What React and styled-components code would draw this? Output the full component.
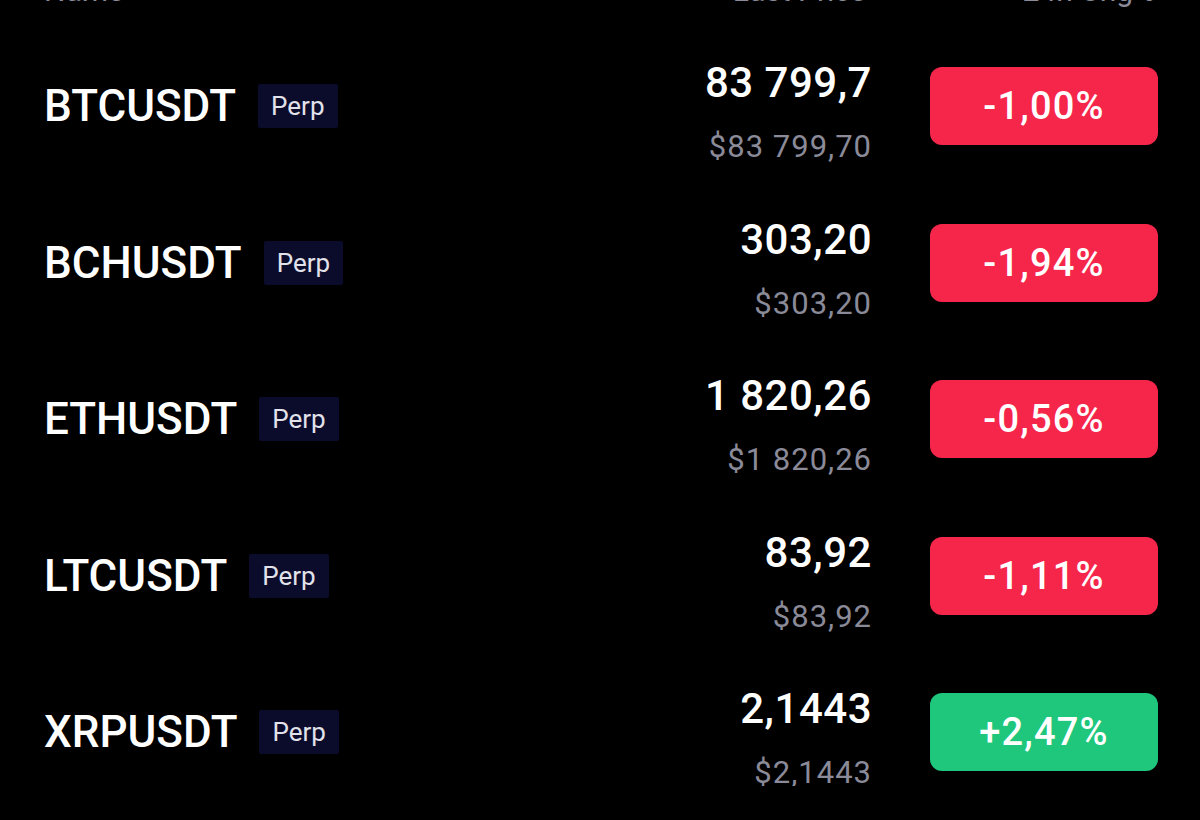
import styled, { createGlobalStyle } from "styled-components";

const GlobalStyle = createGlobalStyle`
    html, body {
        margin: 0;
        padding: 0;
        background: #000;
        overflow: hidden;
    }
    body {
        font-family: Roboto, "Noto Sans", sans-serif;
        color: #fff;
    }
`;

const markets = [
    { name: "BTCUSDT", price: "83 799,7", usd: "$83 799,70", change: "-1,00%" },
    { name: "BCHUSDT", price: "303,20", usd: "$303,20", change: "-1,94%" },
    { name: "ETHUSDT", price: "1 820,26", usd: "$1 820,26", change: "-0,56%" },
    { name: "LTCUSDT", price: "83,92", usd: "$83,92", change: "-1,11%" },
    { name: "XRPUSDT", price: "2,1443", usd: "$2,1443", change: "+2,47%" }
];

const App = () => (
    <Page>
        <GlobalStyle />
        <Header>
            <HeaderName>Name</HeaderName>
            <HeaderPrice>Last Price</HeaderPrice>
            <HeaderChange>24h Chg%</HeaderChange>
        </Header>
        <List>
            {markets.map(m => (
                <Row key={m.name}>
                    <NameCell>
                        <Symbol>{m.name}</Symbol>
                        <Badge>Perp</Badge>
                    </NameCell>
                    <PriceCell>
                        <Price>{m.price}</Price>
                        <UsdPrice>{m.usd}</UsdPrice>
                    </PriceCell>
                    <ChangePill up={m.change.startsWith("+")}>{m.change}</ChangePill>
                </Row>
            ))}
        </List>
    </Page>
);

const Page = styled.div`
    width: 1200px;
    height: 820px;
    padding: 0 42px 0 44px;
    box-sizing: border-box;
    background: #000;
`;

const Header = styled.div`
    display: grid;
    grid-template-columns: 1fr 260px 286px;
    align-items: end;
    height: 40px;
    margin-top: -34px;
    font-size: 30px;
    color: #8b8b99;
    line-height: 1;
`;

const HeaderName = styled.span``;

const HeaderPrice = styled.span`
    text-align: right;
    padding-right: 6px;
`;

const HeaderChange = styled.span`
    text-align: right;
    padding-right: 3px;
`;

const List = styled.div`
    display: flex;
    flex-direction: column;
    padding-top: 22px;
`;

const Row = styled.div`
    display: flex;
    align-items: center;
    height: 156.5px;
`;

const NameCell = styled.div`
    display: flex;
    align-items: center;
    gap: 22px;
    flex: 1;
`;

const Symbol = styled.span`
    font-size: 44px;
    font-weight: 500;
`;

const Badge = styled.span`
    display: inline-flex;
    align-items: center;
    height: 44px;
    padding: 0 13px;
    background: #0b0b2c;
    color: #e2e2ea;
    font-size: 26px;
    border-radius: 2px;
`;

const PriceCell = styled.div`
    display: flex;
    flex-direction: column;
    align-items: flex-end;
    gap: 23px;
    padding-top: 11px;
    margin-right: 58px;
`;

const Price = styled.span`
    font-size: 42px;
    font-weight: 500;
    line-height: 48px;
    letter-spacing: 0.5px;
`;

const UsdPrice = styled.span`
    font-size: 31px;
    color: #8a8a98;
    line-height: 34px;
    letter-spacing: 1px;
`;

const ChangePill = styled.div`
    display: flex;
    align-items: center;
    justify-content: center;
    width: 228px;
    height: 78px;
    border-radius: 12px;
    background: ${props => (props.up ? "#1fc77c" : "#f6264b")};
    color: #fff;
    font-size: 38px;
    font-weight: 500;
    letter-spacing: 1.2px;
`;

export default App;
